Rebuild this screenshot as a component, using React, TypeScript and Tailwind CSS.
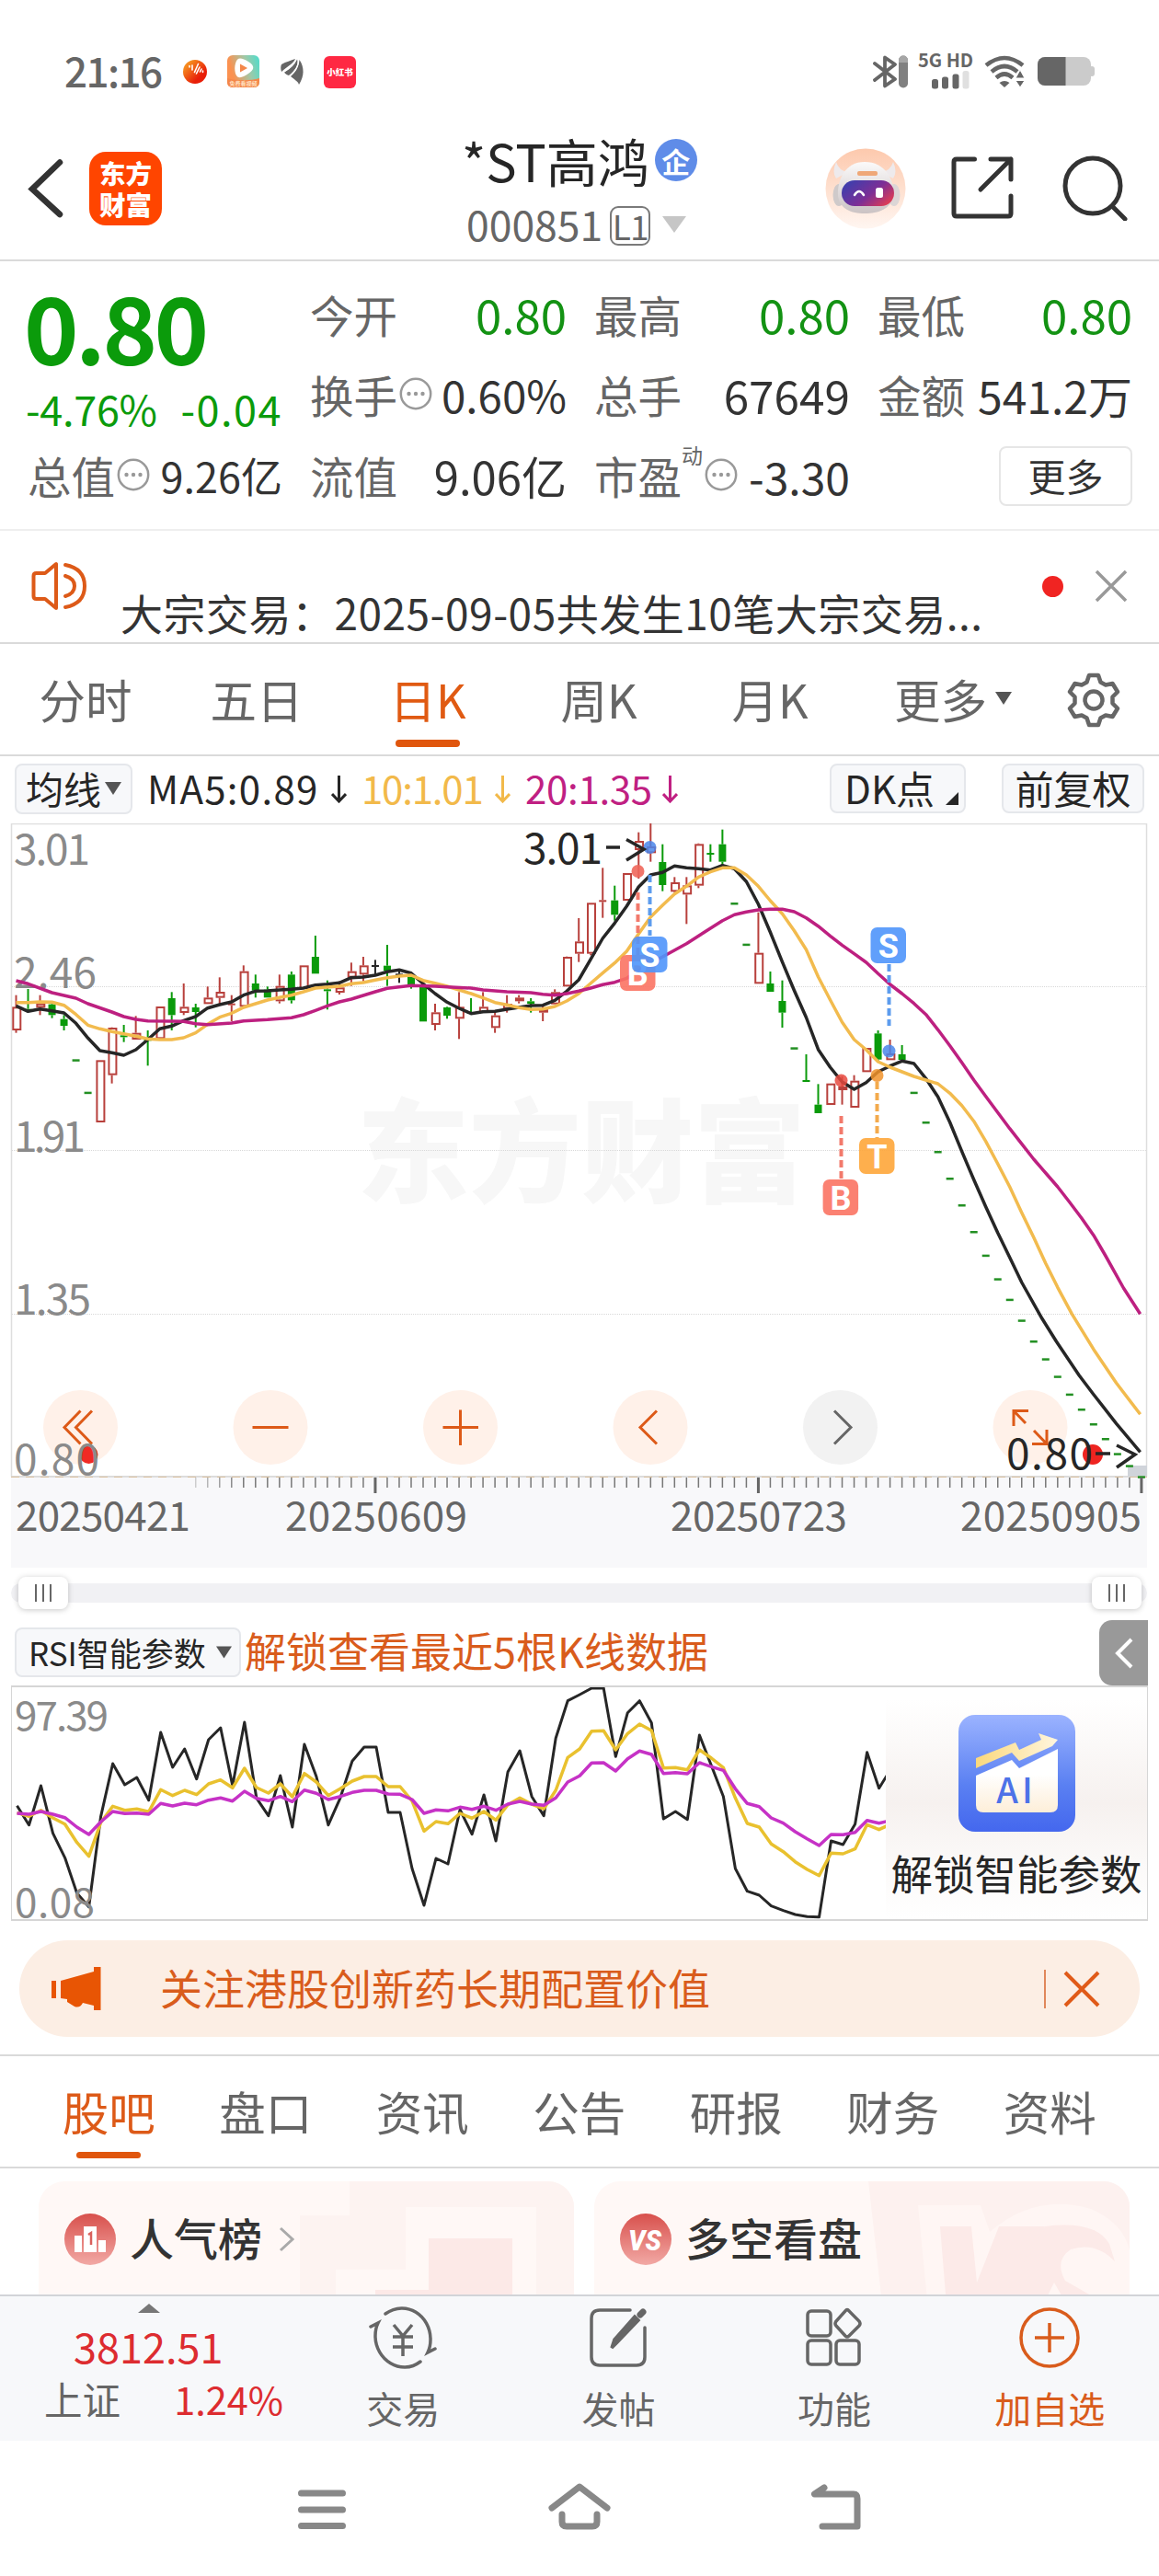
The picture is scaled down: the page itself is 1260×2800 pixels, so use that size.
import React from 'react';

type Point = [number, number];
type Candle = [number, 'r' | 'g' | 'k', number, number, number, number];

const STEP = 13.015;

// index, colour, high, body top, body bottom, low
const CANDLES: Candle[] = [
  [0, 'r', 605, 643, 720, 728], [1, 'g', 585, 650, 652, 655], [2, 'r', 605, 632, 646, 670],
  [3, 'g', 625, 635, 670, 680], [4, 'g', 670, 683, 705, 720], [7, 'r', 817, 817, 1020, 1020],
  [8, 'r', 710, 711, 866, 893], [9, 'g', 702, 736, 739, 758], [10, 'r', 673, 728, 750, 750],
  [11, 'g', 720, 748, 751, 835], [12, 'r', 642, 642, 748, 748], [13, 'g', 595, 615, 670, 720],
  [14, 'r', 567, 643, 663, 670], [15, 'g', 633, 645, 660, 710], [16, 'r', 577, 613, 634, 634],
  [17, 'r', 547, 594, 614, 635], [18, 'r', 605, 632, 634, 690], [19, 'r', 508, 527, 643, 643],
  [20, 'g', 538, 567, 590, 613], [21, 'g', 577, 587, 613, 613], [22, 'r', 538, 575, 625, 632],
  [23, 'g', 528, 538, 622, 632], [24, 'r', 508, 508, 585, 585], [25, 'g', 411, 480, 535, 535],
  [26, 'g', 557, 586, 592, 652], [27, 'r', 560, 580, 597, 603], [28, 'r', 499, 527, 548, 575],
  [29, 'r', 480, 508, 538, 560], [30, 'k', 490, 507, 510, 540], [31, 'g', 441, 509, 525, 575],
  [32, 'k', 525, 535, 538, 565], [33, 'g', 530, 540, 573, 584], [34, 'g', 575, 577, 691, 691],
  [35, 'r', 633, 661, 702, 720], [36, 'g', 643, 645, 672, 682], [37, 'r', 595, 643, 682, 748],
  [38, 'g', 615, 660, 663, 665], [39, 'r', 595, 643, 662, 662], [40, 'r', 660, 671, 712, 728],
  [41, 'r', 605, 633, 650, 662], [42, 'r', 605, 613, 625, 632], [43, 'g', 615, 625, 633, 662],
  [44, 'r', 640, 650, 662, 690], [45, 'r', 586, 595, 635, 635], [46, 'r', 479, 480, 577, 577],
  [47, 'r', 354, 430, 470, 497], [48, 'r', 304, 304, 470, 475], [49, 'r', 190, 295, 298, 353],
  [50, 'g', 248, 296, 343, 362], [51, 'r', 207, 207, 297, 297], [52, 'r', 74, 102, 132, 225],
  [53, 'r', 45, 120, 142, 170], [54, 'g', 113, 171, 246, 266], [55, 'r', 220, 237, 268, 270],
  [56, 'r', 220, 247, 277, 373], [57, 'r', 110, 112, 248, 256], [58, 'g', 113, 141, 144, 170],
  [59, 'g', 65, 113, 170, 185], [62, 'r', 335, 467, 568, 568], [63, 'g', 528, 567, 594, 594],
  [64, 'g', 557, 624, 662, 711], [66, 'g', 798, 882, 886, 886], [67, 'g', 895, 962, 990, 990],
  [68, 'r', 893, 893, 963, 963], [69, 'r', 870, 903, 914, 962], [70, 'r', 866, 884, 972, 972],
  [71, 'r', 777, 777, 856, 856], [72, 'g', 720, 730, 815, 825], [73, 'r', 750, 795, 817, 817],
  [74, 'g', 768, 798, 816, 820],
];

// one-price days: only a dash at the price
const DASHES: Point[] = [
  [5, 817], [6, 923], [60, 306], [61, 440], [65, 778], [75, 923], [76, 1020], [77, 1116],
  [78, 1203], [79, 1290], [80, 1377], [81, 1454], [82, 1531], [83, 1598], [84, 1666], [85, 1734],
  [86, 1792], [87, 1849], [88, 1907], [89, 1956], [90, 2004], [91, 2052], [92, 2101], [93, 2140],
  [94, 2176],
];

const withIndex = (values: number[]): Point[] => values.map((v, i) => [i, v]);

const MA5: Point[] = [
  ...withIndex([
    640, 658, 650, 656, 663, 697, 745, 786, 793, 801, 783, 750, 715, 706, 688, 675, 647, 636, 627, 605,
    592, 591, 588, 586, 582, 572, 569, 565, 548, 546, 540, 529, 523, 533, 568, 600, 628, 648, 665, 659,
    658, 651, 645, 639, 638, 622, 592, 555, 488, 420, 370, 315, 252, 213, 205, 184, 190, 193, 197, 182,
    193, 235, 308, 400, 497, 590, 678, 782, 840, 888, 912, 890, 855, 836, 820, 828, 877, 937, 1020, 1115,
    1207, 1295, 1380, 1460,
  ]),
  [84, 1542], [85.7, 1660], [86.9, 1735], [88.8, 1845], [90, 1907], [91.9, 2002], [93.9, 2095],
];
const MA10: Point[] = [
  ...withIndex([
    629, 629, 627, 628, 638, 668, 703, 715, 724, 731, 739, 748, 750, 750, 744, 728, 700, 677, 664, 645,
    633, 621, 613, 605, 594, 582, 579, 576, 568, 564, 556, 548, 543, 540, 557, 566, 576, 588, 600, 614,
    629, 637, 646, 652, 650, 642, 624, 600, 566, 533, 500, 462, 405, 350, 312, 275, 250, 220, 203, 190,
    190, 213, 250, 297, 340, 395, 457, 545, 620, 693, 750, 783, 822, 840, 855, 870, 882, 894, 925, 965,
    1016, 1082, 1155, 1230, 1315, 1395, 1480, 1558,
  ]),
  [88.2, 1645], [90, 1760], [91.9, 1870], [93.9, 1972],
];
const MA20: Point[] = [
  [0, 558], [1, 568], [3, 597], [5, 615], [6, 633], [8, 660], [9, 675], [10, 684], [11, 689], [13, 690],
  [14, 691], [15, 698], [16, 701], [18, 696], [19, 689], [21, 685], [23, 679], [24, 669], [25, 655],
  [26, 640], [27, 627], [28, 618], [29, 606], [30, 594], [31, 583], [32, 578], [33, 574], [35, 576],
  [36, 578], [38, 582], [39, 588], [41, 594], [43, 597], [44, 602], [45, 605], [46, 600], [47, 592],
  [48, 582], [49, 571], [50, 563], [51, 550], [52, 525], [53, 500], [54, 480], [56, 437], [58, 387],
  [59, 362], [60, 343], [61, 334], [62, 327], [63, 325], [64, 325], [65, 333], [66, 353], [67, 380],
  [68, 412], [69, 442], [70, 470], [71, 498], [72, 535], [73, 570], [74, 600], [75, 632], [76, 668],
  [77, 718], [78, 770], [79, 825], [80, 882], [81, 935], [82, 988], [83, 1040], [84, 1090], [85, 1140],
  [86, 1185], [87, 1230], [88, 1280], [89, 1332], [90, 1388], [91, 1455], [92.5, 1560], [93.9, 1645],
];

const RSI6 = withIndex([
  665, 728, 600, 755, 835, 950, 995, 700, 528, 597, 573, 647, 426, 540, 480, 578, 450, 411, 600, 393,
  640, 698, 567, 735, 465, 570, 728, 640, 520, 474, 474, 687, 687, 870, 990, 837, 855, 678, 758, 630,
  780, 555, 486, 635, 698, 445, 323, 303, 282, 282, 505, 362, 323, 395, 708, 684, 710, 435, 535, 635,
  870, 944, 957, 992, 1007, 1020, 1027, 1028, 780, 792, 725, 491, 608, 545,
]);
const RSI12 = withIndex([
  688, 700, 680, 705, 725, 785, 830, 720, 667, 680, 676, 685, 613, 632, 615, 629, 594, 581, 607, 543,
  606, 624, 594, 636, 560, 588, 632, 610, 585, 570, 570, 603, 603, 650, 748, 717, 724, 690, 706, 684,
  712, 662, 640, 660, 675, 615, 508, 480, 422, 421, 483, 430, 399, 420, 542, 541, 548, 483, 510, 541,
  640, 723, 735, 790, 815, 848, 873, 893, 820, 822, 806, 727, 743, 725,
]);
const RSI24 = withIndex([
  690, 693, 684, 693, 704, 735, 759, 718, 684, 691, 689, 693, 658, 666, 657, 662, 647, 640, 650, 618,
  641, 649, 635, 652, 614, 625, 645, 635, 622, 615, 615, 627, 628, 645, 690, 679, 682, 670, 677, 667,
  680, 660, 651, 660, 664, 640, 588, 568, 526, 525, 552, 512, 487, 498, 560, 557, 561, 525, 538, 550,
  610, 658, 668, 705, 722, 750, 773, 795, 759, 760, 752, 713, 722, 713,
]);

const cx = (i: number) => 17.5 + i * STEP;
const cy = (v: number) => v / 3 - 15;
const rsiY = (v: number) => v / 3 - 93;
const line = (points: Point[], y: (v: number) => number) =>
  points.map(([i, v]) => `${cx(i).toFixed(1)},${y(v).toFixed(1)}`).join(' ');

const COLORS = { r: '#b8403c', g: '#0a9a0a', k: '#262626' };

function CandleShape({ candle }: { candle: Candle }) {
  const [i, tone, high, top, bottom, low] = candle;
  const x = cx(i);
  const color = COLORS[tone];
  const thin = bottom - top < 5;
  const bodyY = cy(top);
  const bodyH = Math.max((bottom - top) / 3, 2);
  return (
    <g>
      {high < top && <line x1={x} x2={x} y1={cy(high)} y2={bodyY} stroke={color} strokeWidth="2" />}
      {low > bottom && <line x1={x} x2={x} y1={bodyY + bodyH} y2={cy(low)} stroke={color} strokeWidth="2" />}
      {tone === 'r' && !thin ? (
        <rect x={x - 3.2} y={bodyY + 1} width="8" height={Math.max(bodyH - 2, 2)} fill="#fff" stroke={color} strokeWidth="2" />
      ) : (
        <rect x={x - 4} y={bodyY} width="8" height={bodyH} fill={color} />
      )}
    </g>
  );
}

function Badge({ x, y, letter, color }: { x: number; y: number; letter: string; color: string }) {
  return (
    <g>
      <rect x={x} y={y} width="38.5" height="39" rx="7" fill={color} fillOpacity="0.9" />
      <text x={x + 19.3} y={y + 32.5} fontSize="36" fontWeight="700" fill="#fff" textAnchor="middle" fontFamily="Roboto, sans-serif">{letter}</text>
    </g>
  );
}

function KLineChart() {
  return (
    <svg width="1260" height="809" viewBox="0 0 1260 809" className="block">
      <rect x="12" y="711" width="1235" height="98" fill="#f8f8fa" />
      <text x="388" y="402" fontSize="122" fontWeight="900" fill="#f7f7f7">东方财富</text>
      {[177, 355, 533].map((y) => (
        <line key={y} x1="13" x2="1247" y1={y + 0.5} y2={y + 0.5} stroke="#d8d8d8" strokeWidth="1" strokeDasharray="1 1" />
      ))}
      <path d="M12.5 710V0.5H1246.5V710" fill="none" stroke="#dedede" strokeWidth="1.5" />
      <line x1="12" x2="1247" y1="710" y2="710" stroke="#dcdcdc" strokeWidth="2" />
      <line x1="12" x2="1247" y1="710.5" y2="710.5" stroke="#d9bf9d" strokeWidth="1" strokeDasharray="9 7" />
      <rect x="1226" y="698" width="21" height="12" fill="#d0d4da" />

      {/* round tool buttons under the price area */}
      {[87.5, 294, 500.5, 707, 913.5, 1120].map((x) => (
        <circle key={x} cx={x} cy="656.5" r="40.5" fill={x === 913.5 ? '#f2f2f2' : '#fff1e9'} />
      ))}
      <g fill="none" stroke="#dd5a18" strokeWidth="3">
        <path d="M87.500 638.500L70 656.500L87.500 674.500M100 638.500L82.500 656.500L100 674.500" />
        <path d="M274.500 656.500H313.500M481.500 656.500H520M500.500 637.500V676M714 638.500L696 656.500L714 674.500" />
        <path d="M1102 655V638.500H1118M1102 638.500L1115 652M1138 659V674.500H1122M1138 674.500L1124 660" />
      </g>
      <path d="M907 638.500L925 656.500L907 674.500" fill="none" stroke="#666" strokeWidth="3" />

      <g fill="#8a8a8a" fontSize="46">
        <text x="15" y="45" textLength="83">3.01</text>
        <text x="15" y="179" textLength="90">2.46</text>
        <text x="15" y="357" textLength="78">1.91</text>
        <text x="15" y="534" textLength="84">1.35</text>
      </g>

      {CANDLES.map((candle) => <CandleShape key={candle[0]} candle={candle} />)}
      {DASHES.map(([i, v]) => <rect key={i} x={cx(i) - 4} y={cy(v) - 1} width="8" height="2.5" fill="#239023" />)}

      <polyline points={line(MA5, cy)} fill="none" stroke="#262626" strokeWidth="3.500" strokeLinejoin="round" />
      <polyline points={line(MA10, cy)} fill="none" stroke="#f2bb4e" strokeWidth="3.500" strokeLinejoin="round" />
      <polyline points={line(MA20, cy)} fill="none" stroke="#bd2080" strokeWidth="3.500" strokeLinejoin="round" />

      {/* buy / sell marks */}
      <g strokeWidth="4" strokeDasharray="8 4" fill="none">
        <path d="M693.500 75V143M914.500 318V386" stroke="#f27a6c" />
        <path d="M706.500 56V122M966.500 153V220" stroke="#5d9cee" />
        <path d="M953.500 281V342" stroke="#f3aa4c" />
      </g>
      <circle cx="693.5" cy="52" r="7" fill="#f0675b" fillOpacity="0.9" />
      <circle cx="706.5" cy="26" r="7" fill="#4a86ea" fillOpacity="0.85" />
      <circle cx="914.5" cy="279.500" r="7" fill="#e84a40" fillOpacity="0.85" />
      <circle cx="953.5" cy="274" r="7" fill="#f1932c" fillOpacity="0.85" />
      <circle cx="966.5" cy="247.500" r="7" fill="#4a86ea" fillOpacity="0.85" />
      <Badge x={674} y={143} letter="B" color="#fb7363" />
      <Badge x={687} y={123} letter="S" color="#4f95fb" />
      <Badge x={946.5} y={113} letter="S" color="#4f95fb" />
      <Badge x={934} y={342} letter="T" color="#fea63a" />
      <Badge x={894.6} y={387} letter="B" color="#fb7363" />

      <text x="569" y="44" fontSize="46" fill="#262626" textLength="86">3.01</text>
      <path d="M659 26H674M681 17.500L700 28L681 40" fill="none" stroke="#262626" strokeWidth="3.500" />

      <circle cx="96.5" cy="686" r="10" fill="#f02a24" />
      <text x="15" y="708" fontSize="46" fill="#8a8a8a" textLength="93">0.80</text>
      <circle cx="1188" cy="686" r="11" fill="#ee2420" />
      <text x="1094" y="702" fontSize="46" fill="#262626" textLength="94">0.80</text>
      <path d="M1191 685H1207M1214 676L1234 686L1214 700" fill="none" stroke="#262626" strokeWidth="3.500" />

      {/* date ruler */}
      {Array.from({ length: 79 }, (_, n) => n + 15).map((i) => (
        <line key={i} x1={cx(i)} x2={cx(i)} y1="711" y2="722" stroke="#777" strokeWidth="1.500" opacity={Math.min(1, (i - 13) / 6)} />
      ))}
      {[30, 62, 94].map((i) => (
        <line key={i} x1={cx(i)} x2={cx(i)} y1="711" y2="728" stroke="#666" strokeWidth="3" />
      ))}
      <g fill="#666" fontSize="44">
        <text x="17" y="769" textLength="190">20250421</text>
        <text x="310" y="769" textLength="198">20250609</text>
        <text x="729" y="769" textLength="192">20250723</text>
        <text x="1044" y="769" textLength="197">20250905</text>
      </g>
    </svg>
  );
}

function RsiChart() {
  return (
    <svg width="951" height="253" viewBox="12 0 951 253" className="block">
      <text x="15" y="47" fontSize="44" fill="#8a8a8a" textLength="102">97.39</text>
      <polyline points={line(RSI6, rsiY)} fill="none" stroke="#262626" strokeWidth="3" strokeLinejoin="round" />
      <polyline points={line(RSI12, rsiY)} fill="none" stroke="#e9c12f" strokeWidth="3.500" strokeLinejoin="round" />
      <polyline points={line(RSI24, rsiY)} fill="none" stroke="#c632c6" strokeWidth="3.500" strokeLinejoin="round" />
      <text x="15" y="250" fontSize="44" fill="#8a8a8a" textLength="87">0.08</text>
    </svg>
  );
}

function StatusBar() {
  return (
    <div className="flex h-[130px] items-center pt-[26px] pl-[70px] text-[#666]">
      <span className="w-[128px] -translate-y-[2px] text-[44px] leading-none font-medium tracking-[-1.6px]">21:16</span>
      <svg width="28" height="28" viewBox="0 0 28 28">
        <defs>
          <linearGradient id="ball" x1="0" y1="0" x2="1" y2="1">
            <stop offset="0.2" stopColor="#f58a1e" />
            <stop offset="0.7" stopColor="#e81e08" />
          </linearGradient>
        </defs>
        <circle cx="14" cy="14" r="13" fill="url(#ball)" />
        <path d="M8 7.500V9M11 7V12M13.500 14.500L17.500 5.500M15.500 16L19 9M19.500 14L21 11M22.500 14.500V13" stroke="#fff" strokeWidth="1.600" strokeLinecap="round" />
      </svg>
      <svg width="36" height="36" viewBox="0 0 36 36" className="ml-[21px]">
        <defs>
          <linearGradient id="video" x1="0" y1="0.4" x2="1" y2="0.1">
            <stop offset="0.1" stopColor="#fb9150" />
            <stop offset="0.6" stopColor="#9fc9a8" />
            <stop offset="1" stopColor="#50dccb" />
          </linearGradient>
        </defs>
        <rect width="35" height="35" rx="6" fill="url(#video)" />
        <path d="M0 25C8 28 26 28 35 25V29Q35 35 29 35H6Q0 35 0 29Z" fill="#f4874a" />
        <path d="M9 9C11 1 16 3 23 7C31 12 29 16 23 20C16 25 11 26 9 20C8 16 8 12 9 9Z" fill="#fff" />
        <path d="M14 9.500L22 14L14 18.500Z" fill="#f4874a" />
        <text x="17.5" y="33" fontSize="6" fontWeight="700" fill="#ffe0c0" textAnchor="middle">免费看视频</text>
      </svg>
      <svg width="26" height="30" viewBox="0 0 26 30" className="ml-[22px]">
        <path d="M1 7C6 4 11 3 16 1C14 6 9 8 1 15C0 12 0 9 1 7Z" fill="#666" />
        <path d="M4 15.500C11 11 15 7 18 1.500C20 6 17 13 9 19C7 18.500 5 17.500 4 15.500Z" fill="#666" />
        <path d="M11 20C17 15 20 9 20.500 2C26 10 26 20 20 29C19 25 14 23 11 20Z" fill="#666" />
        <path d="M4 15C10 11.500 15 7 17 1.500M10 19.500C17 14 19.500 9 19.500 2" stroke="#fff" strokeWidth="1.200" fill="none" />
      </svg>
      <span className="ml-[21px] flex h-[35px] w-[35px] items-center justify-center rounded-[6px] bg-[#ff2843] text-[9.5px] font-black whitespace-nowrap text-white">小红书</span>

      <svg width="38" height="36" viewBox="0 0 38 36" className="ml-[562px]">
        <path d="M2 9L24 26L13 33.500V2.500L24 10L2 27" fill="none" stroke="#666" strokeWidth="3.800" strokeLinejoin="round" strokeLinecap="round" />
        <rect x="28" y="0.500" width="10" height="35" rx="5" fill="#808080" />
        <path d="M28 8V5.500A5 5 0 0 1 38 5.500V8Z" fill="#a6a6a6" />
      </svg>
      <div className="ml-[11px] flex h-[42px] w-[58px] flex-col">
        <span className="text-[20px] leading-[16px] font-bold whitespace-nowrap">5G HD</span>
        <svg width="58" height="22" viewBox="0 0 58 22" className="mt-[3px]">
          <rect x="15" y="10" width="7" height="10.500" rx="2.500" fill="#666" />
          <rect x="26" y="7.500" width="7" height="13" rx="2.500" fill="#666" />
          <rect x="37.500" y="4.500" width="7" height="16" rx="2.500" fill="#666" />
          <rect x="48.500" y="1" width="7" height="19.500" rx="2.500" fill="#e0e0e0" />
        </svg>
      </div>
      <svg width="44" height="36" viewBox="0 0 44 36" className="ml-[14px]">
        <g fill="none" stroke="#666" strokeWidth="4.600">
          <path d="M2 11Q22 -5 42 11" />
          <path d="M8 18Q22 6 36 18" />
          <path d="M13 24.500Q22 16.500 31 24.500" />
        </g>
        <path d="M16.500 30Q22 26 27.500 30L22 35Z" fill="#666" />
        <path d="M39 16L44 25H34ZM39 35L34 27.500H44Z" fill="#666" stroke="#fff" strokeWidth="1" />
      </svg>
      <svg width="64" height="34" viewBox="0 0 64 34" className="ml-[13px]">
        <rect x="1" y="1" width="58" height="31" rx="8" fill="#cbcbcb" />
        <rect x="57" y="11" width="6" height="11" rx="3" fill="#cbcbcb" />
        <path d="M31.500 1H9A8 8 0 0 0 1 9V24A8 8 0 0 0 9 32H31.500Z" fill="#666" />
      </svg>
    </div>
  );
}

function Header() {
  return (
    <header className="flex h-[154px] items-center border-b-2 border-[#dadada] text-[#333]">
      <div className="flex w-[502px] items-center pb-[2px] pl-[30px]">
        <svg width="40" height="66" viewBox="0 0 40 66" fill="none" stroke="#333" strokeWidth="6.500" strokeLinecap="round">
          <path d="M35 4.500L5 33.500L35 61" />
        </svg>
        <div className="ml-[27px] flex h-[80px] w-[79px] flex-col items-center justify-center rounded-[18px] bg-[#ff4500] text-[28.5px] leading-[34px] font-black text-white">
          <span>东方</span>
          <span>财富</span>
        </div>
      </div>
      <div className="flex w-[259px] flex-col pt-[3px]">
        <div className="flex h-[69px] items-center">
          <h1 className="text-[56px] leading-[69px] font-normal whitespace-nowrap text-[#262626]">*ST高鸿</h1>
          <span className="mt-[2px] ml-[6px] flex h-[46px] w-[46px] shrink-0 items-center justify-center rounded-full bg-[#5f8ce8] text-[31px] leading-none font-bold text-white">企</span>
        </div>
        <div className="flex h-[69px] items-center pl-[5px] text-[#666]">
          <span className="text-[44.5px] leading-[69px]">000851</span>
          <span className="mt-[6px] ml-[8px] flex h-[43px] w-[44px] items-center justify-center rounded-[9px] border-2 border-[#7a7a7a] text-[37px] leading-none tracking-[-1px]">L1</span>
          <svg width="26" height="18" viewBox="0 0 26 18" className="mt-[4px] ml-[13px]"><path d="M0 0H26L13 18Z" fill="#c6c6c6" /></svg>
        </div>
      </div>
      <svg width="88" height="88" viewBox="0 0 88 88" className="mb-[2px] ml-[136px]">
        <defs>
          <linearGradient id="halo" x1="0" y1="0" x2="0" y2="1">
            <stop offset="0" stopColor="#fdc9ad" />
            <stop offset="1" stopColor="#fff6f1" />
          </linearGradient>
          <linearGradient id="visor" x1="0" y1="0.2" x2="1" y2="0.8">
            <stop offset="0" stopColor="#3b3fae" />
            <stop offset="0.55" stopColor="#7c2f96" />
            <stop offset="1" stopColor="#e63d50" />
          </linearGradient>
          <linearGradient id="helmet" x1="0" y1="0" x2="0" y2="1">
            <stop offset="0" stopColor="#fbfafa" />
            <stop offset="1" stopColor="#cbc3c4" />
          </linearGradient>
        </defs>
        <circle cx="44" cy="44" r="43.500" fill="url(#halo)" />
        <path d="M12 15Q7 26 12 33L25 26Q15 25 12 15ZM74 15Q79 26 74 33L61 26Q71 25 74 15Z" fill="#eeeaec" />
        <ellipse cx="15" cy="51" rx="6.500" ry="12" fill="#cfcaca" />
        <ellipse cx="75" cy="51" rx="6.500" ry="12" fill="#dcd6d6" />
        <path d="M43 15C65 15 76 34 74 52C72 66 58 71 43 71C28 71 16 66 14 52C13 34 22 15 43 15Z" fill="url(#helmet)" />
        <rect x="35" y="25" width="22" height="5" rx="2" fill="#efa878" />
        <rect x="18" y="35" width="57" height="28" rx="14" fill="url(#visor)" />
        <path d="M32 51Q37 43 42 51" fill="none" stroke="#fff" strokeWidth="2.500" strokeLinecap="round" />
        <rect x="55" y="43" width="8" height="11" rx="2.500" fill="#fff" />
      </svg>
      <svg width="70" height="70" viewBox="0 0 70 70" className="mb-[4px] ml-[48px]" fill="none" stroke="#333" strokeWidth="5" strokeLinecap="round" strokeLinejoin="round">
        <path d="M26.500 4H7Q4 4 4 7V63Q4 66 7 66H63Q66 66 66 63V44M44 4H66V26M66 4L33 37" />
      </svg>
      <svg width="72" height="72" viewBox="0 0 72 72" className="mb-[4px] ml-[52px]" fill="none" stroke="#333" strokeWidth="5" strokeLinecap="round">
        <circle cx="33" cy="34" r="30" />
        <path d="M55 57L68 70" />
      </svg>
    </header>
  );
}

function InfoDot() {
  return (
    <svg width="36" height="36" viewBox="0 0 36 36" className="ml-[2px] shrink-0 -translate-y-px">
      <circle cx="18" cy="18" r="16.200" fill="none" stroke="#999" strokeWidth="2.500" />
      <circle cx="10.500" cy="18" r="2.200" fill="#999" />
      <circle cx="18" cy="18" r="2.200" fill="#999" />
      <circle cx="25.500" cy="18" r="2.200" fill="#999" />
    </svg>
  );
}

interface StatProps {
  label: string;
  value: string;
  size?: string;
  green?: boolean;
  info?: boolean;
  sup?: string;
}

function Stat({ label, value, size = 'text-[48px]', green, info, sup }: StatProps) {
  return (
    <div className="flex h-full items-center text-[47.5px] leading-none whitespace-nowrap">
      <span className="text-[#666]">{label}</span>
      {sup && <sup className="top-0 -translate-y-[22px] text-[23px] leading-none text-[#666]">{sup}</sup>}
      {info && <InfoDot />}
      <span className={`ml-auto ${green ? 'text-[51px] text-[#139213]' : `${size} text-[#333]`}`}>{value}</span>
    </div>
  );
}

function Quote() {
  return (
    <section className="h-[293px] border-b-2 border-[#eeeeee] pt-[14px] pl-[30px]">
      <div className="grid grid-cols-[277px_279px_278px_277px] grid-rows-[87px_88px_87px] gap-x-[30px]">
        <div className="row-span-2 text-[#0b9b0b]">
          <div className="-ml-[4px] h-[109px] text-[101px] leading-[110px] font-bold tracking-[-3.5px]">0.80</div>
          <div className="flex justify-between text-[45px] leading-[74px] whitespace-nowrap">
            <span className="-ml-[2px] tracking-[-0.3px]">-4.76%</span>
            <span className="tracking-[1.5px]">-0.04</span>
          </div>
        </div>
        <Stat label="今开" value="0.80" green />
        <Stat label="最高" value="0.80" green />
        <Stat label="最低" value="0.80" green />
        <Stat label="换手" value="0.60%" size="text-[47.5px]" info />
        <Stat label="总手" value="67649" size="text-[49.5px]" />
        <Stat label="金额" value="541.2万" />
        <Stat label="总值" value="9.26亿" size="text-[45px]" info />
        <Stat label="流值" value="9.06亿" size="text-[49px]" />
        <Stat label="市盈" value="-3.30" info sup="动" />
        <button className="mt-[12px] h-[65px] w-[145px] justify-self-end rounded-[8px] border-2 border-[#e6e6e6] pb-[3px] text-[41px] leading-none text-[#333]">更多</button>
      </div>
    </section>
  );
}

function NewsBar() {
  return (
    <div className="flex h-[123px] items-start border-b-2 border-[#dadada] pt-[33px] pl-[33px]">
      <svg width="62" height="54" viewBox="0 0 62 54" fill="none" stroke="#dd5a18" strokeWidth="4" strokeLinejoin="round" strokeLinecap="round">
        <path d="M3.500 16Q3.500 13 6.500 13H16L28 3V51L16 41H6.500Q3.500 41 3.500 38Z" />
        <path d="M38 16Q48 19 48 27Q48 35 38 38M38 4Q59 8 59 27Q59 46 38 50" />
      </svg>
      <span className="mt-[25px] ml-[36px] w-[960px] text-[46px] leading-[60px] tracking-[0.5px] whitespace-nowrap text-[#333]">大宗交易：2025-09-05共发生10笔大宗交易...</span>
      <span className="mt-[16px] ml-[42px] h-[23px] w-[23px] rounded-full bg-[#f02422]" />
      <svg width="36" height="36" viewBox="0 0 36 36" className="mt-[9px] ml-[34px]"><path d="M2 2L34 34M34 2L2 34" stroke="#999" strokeWidth="3.500" /></svg>
    </div>
  );
}

function PeriodTabs() {
  return (
    <nav className="flex h-[122px] items-start border-b-2 border-[#dadada] text-[50.5px] leading-[118px] text-[#666]">
      {['分时', '五日', '日K', '周K', '月K'].map((label) => (
        <div key={label} className={`flex w-[186px] flex-col items-center ${label === '日K' ? 'text-[#e05a12]' : ''}`}>
          <span className="h-[104px]">{label}</span>
          {label === '日K' && <span className="h-[8px] w-[70px] rounded-full bg-[#e0560d]" />}
        </div>
      ))}
      <div className="flex h-[118px] w-[172px] items-center pl-[42px]">
        <span>更多</span>
        <svg width="18" height="14" viewBox="0 0 18 14" className="ml-[9px] shrink-0"><path d="M0 0H18L9 14Z" fill="#555" /></svg>
      </div>
      <svg width="60" height="60" viewBox="0 0 60 60" className="mt-[31px] ml-[57px]" fill="none" stroke="#666" strokeWidth="4.500" strokeLinejoin="round">
        <path d="M25 3H35L37.500 10.500L43 13.500L50.500 12L56 21L50.500 26.500V33.500L56 39L50.500 48L43 46.500L37.500 49.500L35 57H25L22.500 49.500L17 46.500L9.500 48L4 39L9.500 33.500V26.500L4 21L9.500 12L17 13.500L22.500 10.500Z" />
        <circle cx="30" cy="30" r="9.500" />
      </svg>
    </nav>
  );
}

function DownArrow() {
  return (
    <svg width="17" height="30" viewBox="0 0 17 30" className="mt-[4px] ml-[13px] shrink-0" fill="none" stroke="currentColor" strokeWidth="3">
      <path d="M8.500 0V28M1 20L8.500 28L16 20" />
    </svg>
  );
}

function ChartToolbar() {
  return (
    <div className="flex h-[73px] items-start pt-[8px] pl-[16px] text-[42px] leading-none whitespace-nowrap text-[#262626]">
      <button className="flex h-[55px] w-[128px] items-center rounded-[8px] border-2 border-[#e5e7eb] bg-[#f7f8fa] pb-[3px] pl-[10px] text-[41px]">
        均线
        <svg width="18" height="14" viewBox="0 0 18 14" className="mt-[2px] ml-[4px] shrink-0"><path d="M0 0H18L9 14Z" fill="#555" /></svg>
      </button>
      <div className="flex h-[52px] items-center">
        <span className="ml-[16px] w-[187px] tracking-[1.3px]">MA5:0.89</span>
        <span className="flex items-center"><DownArrow /></span>
        <span className="ml-[16px] flex items-center text-[#f2b94a]"><span className="w-[132px] tracking-[-1.2px]">10:1.01</span><DownArrow /></span>
        <span className="ml-[16px] flex items-center text-[#c02082]"><span className="w-[136px] tracking-[-0.3px]">20:1.35</span><DownArrow /></span>
      </div>
      <button className="ml-auto flex h-[54px] w-[148px] items-center rounded-[8px] border-2 border-[#e5e7eb] bg-[#f7f8fa] pb-[3px] pl-[14px]">
        DK点
        <svg width="14" height="14" viewBox="0 0 14 14" className="mt-[24px] ml-[12px] shrink-0"><path d="M14 0V14H0Z" fill="#262626" /></svg>
      </button>
      <button className="mr-[16px] ml-[39px] h-[54px] w-[155px] rounded-[8px] border-2 border-[#e5e7eb] bg-[#f7f8fa] pb-[3px]">前复权</button>
    </div>
  );
}

function SliderHandle() {
  return (
    <div className="flex h-[35px] w-[54px] items-center justify-center gap-[6px] rounded-[8px] bg-white shadow-[0_1px_6px_rgba(0,0,0,0.22)]">
      <span className="h-[19px] w-[2px] bg-[#666]" />
      <span className="h-[19px] w-[2px] bg-[#666]" />
      <span className="h-[19px] w-[2px] bg-[#666]" />
    </div>
  );
}

function RangeSlider() {
  return (
    <div className="flex h-[57px] items-center px-[12px]">
      <div className="mt-[-2px] flex h-[21px] w-[1235px] items-center justify-between rounded-full bg-[#f1f1f4] pr-[6px] pl-[8px]">
        <SliderHandle />
        <SliderHandle />
      </div>
    </div>
  );
}

function RsiPanel() {
  return (
    <section>
      <div className="flex h-[71px] items-center pl-[16px]">
        <button className="mt-[-1px] flex h-[54px] w-[246px] shrink-0 items-center rounded-[8px] border-2 border-[#e5e7eb] bg-[#f7f8fa] pb-[2px] pl-[13px] text-[35px] leading-none whitespace-nowrap text-[#262626]">
          RSI智能参数
          <svg width="17" height="14" viewBox="0 0 18 14" className="mt-[1px] ml-[11px] shrink-0"><path d="M0 0H18L9 14Z" fill="#555" /></svg>
        </button>
        <span className="mb-[5px] ml-[4px] text-[45px] leading-[60px] whitespace-nowrap text-[#d95c1c]">解锁查看最近5根K线数据</span>
        <button className="mr-[12px] ml-auto flex h-[71px] w-[53px] items-center justify-center rounded-l-[14px] bg-[#999]">
          <svg width="20" height="34" viewBox="0 0 20 34" fill="none" stroke="#fff" strokeWidth="4"><path d="M18 2L3 17L18 32" /></svg>
        </button>
      </div>
      <div className="mx-[12px] flex h-[256px] border-x border-y-2 border-[#d6d6d6]">
        <div className="w-[950px] shrink-0 overflow-hidden">
          <RsiChart />
        </div>
        <div className="flex flex-1 flex-col items-center bg-[linear-gradient(180deg,#ffffff_5%,#f6f1ef_50%,#fbf9f8_75%,#ffffff_100%)] pt-[30px]">
          <svg width="127" height="127" viewBox="0 0 127 127" className="shrink-0">
            <defs>
              <linearGradient id="aiBg" x1="0" y1="0" x2="0" y2="1">
                <stop offset="0" stopColor="#9bb3ff" />
                <stop offset="0.6" stopColor="#5a80f2" />
                <stop offset="1" stopColor="#4467ee" />
              </linearGradient>
              <linearGradient id="aiPaper" x1="0" y1="0" x2="0" y2="1">
                <stop offset="0.4" stopColor="#ffffff" />
                <stop offset="1" stopColor="#fdeed8" />
              </linearGradient>
              <linearGradient id="aiArrow" x1="0" y1="0" x2="1" y2="0">
                <stop offset="0" stopColor="#fbd87c" />
                <stop offset="1" stopColor="#fff6df" />
              </linearGradient>
            </defs>
            <rect width="127" height="127" rx="18" fill="url(#aiBg)" />
            <path d="M19 66L58 49L66 58L108 37V98Q108 106 100 106H27Q19 106 19 98Z" fill="url(#aiPaper)" />
            <path d="M19 47L62 30L66 38L90 27L87 20L108 27L102 34L66 50L58 41L19 58Z" fill="url(#aiArrow)" />
            <text x="63" y="96" fontSize="38" fontWeight="500" fill="#4d72e8" textAnchor="middle" letterSpacing="4">AI</text>
          </svg>
          <span className="mt-[12px] text-[45.5px] leading-[64px] whitespace-nowrap text-[#262626]">解锁智能参数</span>
        </div>
      </div>
    </section>
  );
}

function PromoBanner() {
  return (
    <div className="mx-[21px] mt-[21px] flex h-[105px] items-center rounded-full bg-[#fceee4] pl-[35px] text-[#d95c1c]">
      <svg width="54" height="48" viewBox="0 0 54 48" fill="#e85504">
        <path d="M0 15H5V34H0ZM10 15L46 5V0H53.500V47H46V42L34 39Q31 45 25 43L17 38V35L10 34Z" />
      </svg>
      <span className="mb-[6px] ml-[64px] text-[46px] leading-none whitespace-nowrap">关注港股创新药长期配置价值</span>
      <span className="mr-[19px] ml-auto h-[42px] w-[2px] bg-[#e0875a]" />
      <svg width="40" height="40" viewBox="0 0 40 40" className="mr-[43px]"><path d="M2 2L38 38M38 2L2 38" stroke="#e05a18" strokeWidth="4" /></svg>
    </div>
  );
}

function SectionTabs() {
  return (
    <nav className="mt-[19px] flex h-[124px] border-y-2 border-[#dadada] pl-[33px] text-[50.5px] leading-[119px] text-[#666]">
      {['股吧', '盘口', '资讯', '公告', '研报', '财务', '资料'].map((label, i) => (
        <div key={label} className={`flex w-[170.5px] flex-col items-center ${i === 0 ? 'text-[#dd5a18]' : ''}`}>
          <span className="h-[104px]">{label}</span>
          {i === 0 && <span className="h-[7px] w-[70px] rounded-full bg-[#e0560d]" />}
        </div>
      ))}
    </nav>
  );
}

function Cards() {
  return (
    <div className="flex h-[137px] gap-[22px] overflow-hidden pt-[14px] pl-[42px]">
      <div className="relative h-[160px] w-[582px] shrink-0 overflow-hidden rounded-[28px] bg-[#fff8f6]">
        <svg width="582" height="160" viewBox="0 0 582 160" className="absolute inset-0">
          <path d="M338 0H582V160H284V37H338Z" fill="#fdf3f1" />
          <path d="M399 28H541V160H323V96H399Z" fill="#fff8f6" />
          <path d="M424 62H515V160H366V118H424Z" fill="#fce9e7" />
        </svg>
        <div className="relative flex items-center pt-[35px] pl-[28px]">
          <svg width="56" height="56" viewBox="0 0 56 56">
            <defs>
              <linearGradient id="rank" x1="0" y1="0" x2="0" y2="1">
                <stop offset="0" stopColor="#d8504c" />
                <stop offset="1" stopColor="#f2a9a5" />
              </linearGradient>
            </defs>
            <circle cx="28" cy="28" r="28" fill="url(#rank)" />
            <path d="M11 24H19V42H11ZM21 14H35V42H21ZM37 29H45V42H37Z" fill="#fff" />
            <path d="M26 23L29 21V34" stroke="#d9605c" strokeWidth="2.500" fill="none" />
          </svg>
          <span className="-mt-[6px] ml-[15px] text-[48px] leading-[56px] font-medium text-[#333]">人气榜</span>
          <svg width="18" height="28" viewBox="0 0 18 28" className="ml-[18px]" fill="none" stroke="#aaa" strokeWidth="3"><path d="M2 2L15 14L2 26" /></svg>
        </div>
      </div>
      <div className="relative h-[160px] w-[582px] shrink-0 overflow-hidden rounded-[28px] bg-[#fff8f6]">
        <svg width="582" height="160" viewBox="0 0 582 160" className="absolute inset-0">
          <path d="M298 0H582V160H316Z" fill="#fdf1ef" />
          <path d="M352 26H420L430 55Q480 12 540 30Q575 45 582 75V160H365Z" fill="#fff6f4" />
          <path d="M376 49H410L416 110L440 49H490L440 160H385Z" fill="#fceae8" />
          <path d="M490 49Q545 42 560 68L566 87Q545 65 518 74Q500 86 512 108L540 124H508L500 110L475 160H425Z" fill="#fceae8" />
        </svg>
        <div className="relative flex items-center pt-[35px] pl-[28px]">
          <svg width="56" height="56" viewBox="0 0 56 56">
            <circle cx="28" cy="28" r="28" fill="url(#rank)" />
            <text x="27" y="39.5" fontSize="32" fontWeight="900" fontStyle="italic" fill="#fff" textAnchor="middle" fontFamily="Roboto, sans-serif" textLength="36" lengthAdjust="spacingAndGlyphs">VS</text>
          </svg>
          <span className="-mt-[6px] ml-[15px] text-[48px] leading-[56px] font-medium text-[#333]">多空看盘</span>
        </div>
      </div>
    </div>
  );
}

function BarItem({ label, children, accent }: { label: string; children: React.ReactNode; accent?: boolean }) {
  return (
    <div className={`flex w-[234.4px] flex-col items-center pt-[5px] text-[40px] leading-[52px] ${accent ? 'text-[#d95c1c]' : 'text-[#666]'}`}>
      <svg width="80" height="74" viewBox="0 0 80 74" fill="none" stroke="currentColor" strokeWidth="3.500" strokeLinecap="round">{children}</svg>
      <span className="mt-[16px]">{label}</span>
    </div>
  );
}

function BottomBar() {
  return (
    <div className="flex h-[159px] border-t-2 border-[#d2d4d8] bg-[#f7f8fa]">
      <div className="flex w-[321px] flex-col">
        <svg width="24" height="10" viewBox="0 0 24 10" className="mt-[8px] ml-[150px] shrink-0"><path d="M12 0L24 10H0Z" fill="#777" /></svg>
        <span className="ml-[80px] h-[68px] text-[45px] leading-[72px] text-[#dd2c30]">3812.51</span>
        <div className="flex items-center justify-between pr-[13px] pl-[48px] text-[41.5px] leading-[50px]">
          <span className="text-[#666]">上证</span>
          <span className="text-[#dd2c30]">1.24%</span>
        </div>
      </div>
      <BarItem label="交易">
        <path d="M21 14C44 -2 70 16 70 42Q70 50 67 56L75 52M59 66C38 82 10 64 10 38Q10 30 13 24L5 28" />
        <path d="M30 26L40 38L50 26M40 38V60M29 39H51M29 50H51" strokeLinecap="butt" />
      </BarItem>
      <BarItem label="发帖">
        <path d="M52 10H19Q10 10 10 19V61Q10 70 19 70H59Q68 70 68 61V29" />
        <path d="M61 21L38 45L32 51L35 42L57 17Z" fill="currentColor" />
        <path d="M63 15L66 12" strokeWidth="7" />
      </BarItem>
      <BarItem label="功能">
        <rect x="11" y="11" width="25" height="27" rx="4" />
        <rect x="11" y="43" width="25" height="26" rx="4" />
        <rect x="42" y="43" width="25" height="26" rx="4" />
        <path d="M52 11Q54 8 56 11L67 22Q69 25 67 27L56 38Q54 40 52 38L42 27Q40 25 42 22Z" />
      </BarItem>
      <BarItem label="加自选" accent>
        <circle cx="40" cy="40" r="31" />
        <path d="M24 40H56M40 24V56" strokeLinecap="butt" />
      </BarItem>
    </div>
  );
}

function SystemNav() {
  return (
    <div className="flex h-[147px] items-start pt-[43px] pl-[322px]">
      <svg width="56" height="54" viewBox="0 0 56 54" stroke="#888" strokeWidth="7" strokeLinecap="round"><path d="M5.500 14H50.500M5.500 32H50.500M5.500 49.500H50.500" /></svg>
      <svg width="70" height="56" viewBox="0 0 70 56" className="ml-[217px]" fill="none" stroke="#888" strokeWidth="7" strokeLinecap="round" strokeLinejoin="round">
        <path d="M5 30L35 7L65 30M16 37V45Q16 50 21 50H49Q54 50 54 45V37" />
      </svg>
      <svg width="58" height="56" viewBox="0 0 58 56" className="ml-[216px]" fill="none" stroke="#888" strokeWidth="7" strokeLinecap="round" strokeLinejoin="round">
        <path d="M15 8L4.500 15H47Q51 15 51 20V50H13" />
      </svg>
    </div>
  );
}

export default function App() {
  return (
    <div className="h-[2800px] w-[1260px] overflow-hidden bg-white font-['Noto_Sans_CJK_SC',sans-serif]">
      <StatusBar />
      <Header />
      <Quote />
      <NewsBar />
      <PeriodTabs />
      <ChartToolbar />
      <KLineChart />
      <RangeSlider />
      <RsiPanel />
      <PromoBanner />
      <SectionTabs />
      <Cards />
      <BottomBar />
      <SystemNav />
    </div>
  );
}
